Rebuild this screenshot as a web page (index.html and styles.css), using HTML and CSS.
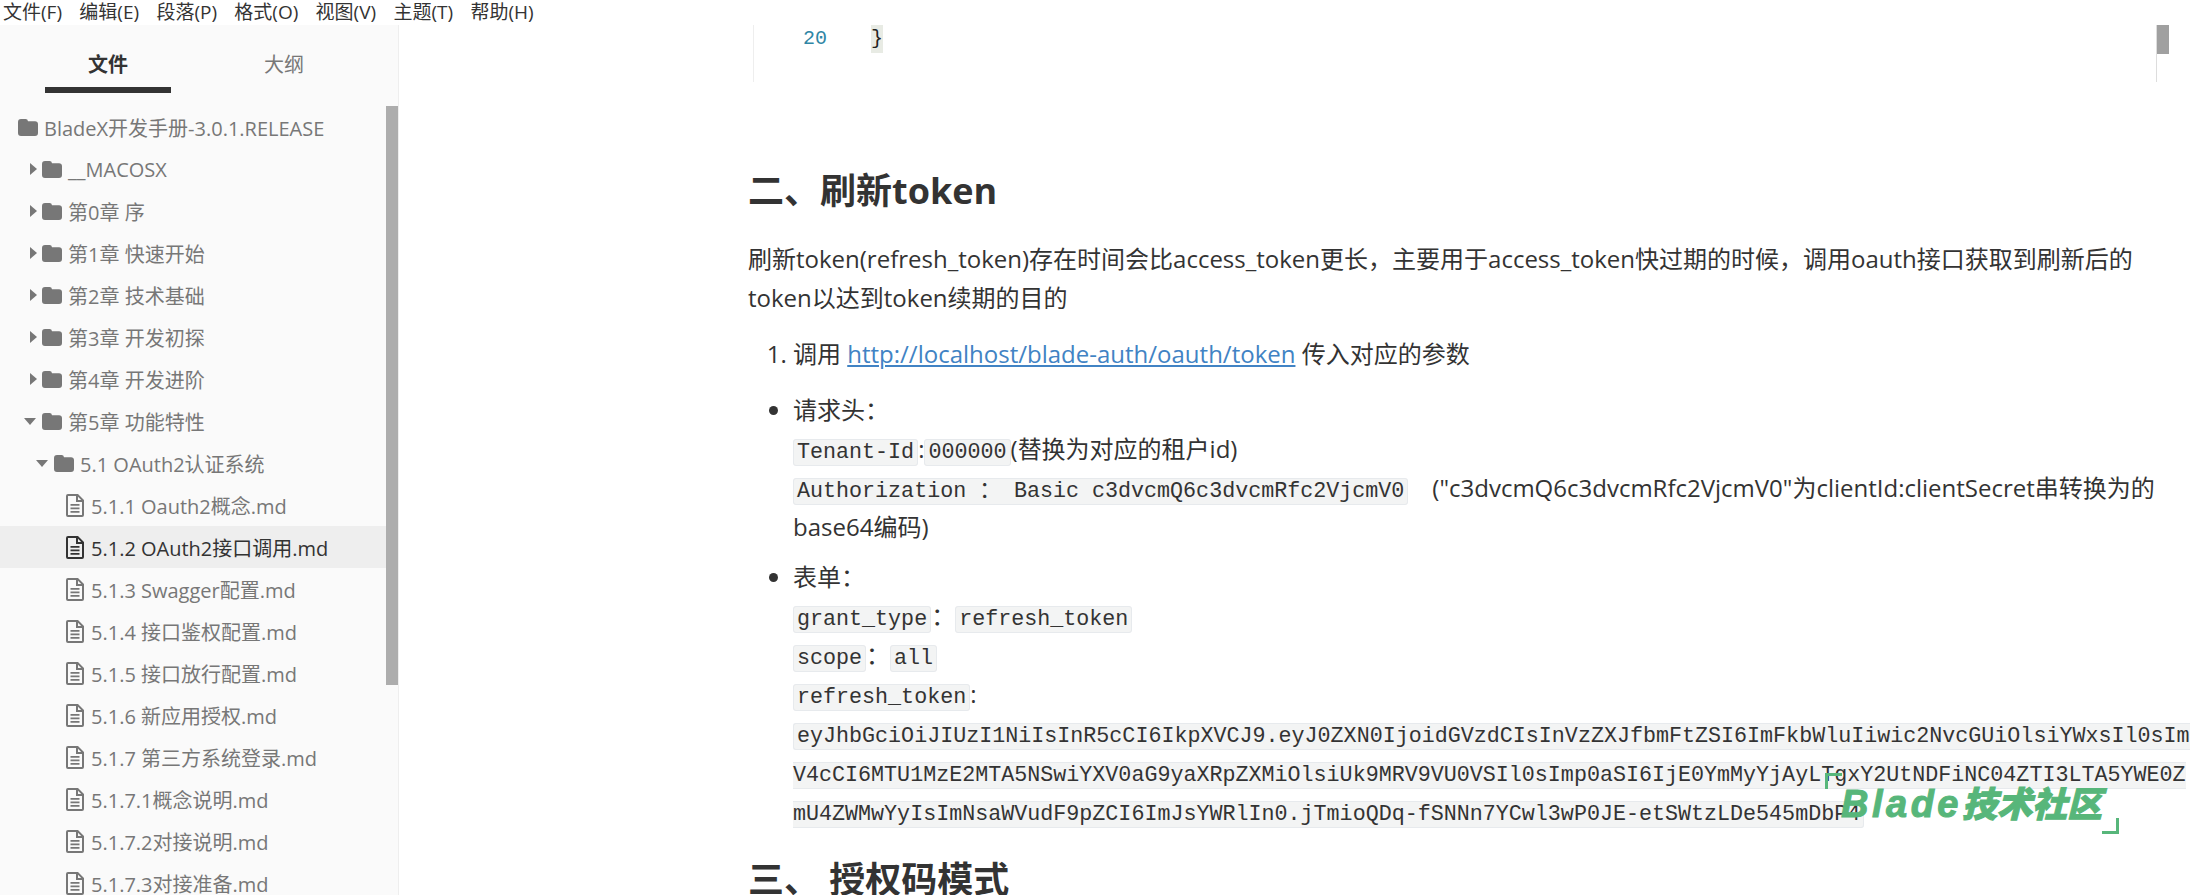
FILE: index.html
```html
<!DOCTYPE html>
<html lang="zh-CN">
<head>
    <meta charset="UTF-8">
    <meta name="viewport" content="width=device-width, initial-scale=1.0">
    <title>OAuth2接口调用</title>
    <link rel="stylesheet" href="styles.css">
</head>
<body>
    <svg class="icon-defs" aria-hidden="true">
        <symbol id="i-folder" viewBox="0 0 20 17">
            <path d="M3 0h4.500a2.500 2.500 0 0 1 2.500 2.200h7a3 3 0 0 1 3 2.800v9a3 3 0 0 1-3 3H3a3 3 0 0 1-3-3V3a3 3 0 0 1 3-3z"/>
        </symbol>
        <symbol id="i-file" viewBox="0 0 18 23">
            <path fill-rule="evenodd" d="M2 0h10l6 6v15a2 2 0 0 1-2 2H2a2 2 0 0 1-2-2V2a2 2 0 0 1 2-2zm0 2v19h14V8h-6V2zm10 .8V6h3.200zM4.500 10h9v1.800h-9zm0 3.500h9v1.800h-9zm0 3.500h9v1.800h-9z"/>
        </symbol>
        <symbol id="i-right" viewBox="0 0 7 12"><path d="M0 0l7 6-7 6z"/></symbol>
        <symbol id="i-down" viewBox="0 0 12 7"><path d="M0 0h12L6 7z"/></symbol>
    </svg>

    <div class="app">
        <nav class="menubar">
            <span>文件(F)</span>
            <span>编辑(E)</span>
            <span>段落(P)</span>
            <span>格式(O)</span>
            <span>视图(V)</span>
            <span>主题(T)</span>
            <span>帮助(H)</span>
        </nav>

        <div class="workspace">
            <aside class="sidebar">
                <div class="sidebar-panel">
                    <div class="tabs">
                        <div class="tab active">文件</div>
                        <div class="tab">大纲</div>
                    </div>
                    <ul class="tree">
                        <li class="row lv0"><svg class="ic-folder"><use href="#i-folder"/></svg>BladeX开发手册-3.0.1.RELEASE</li>
                        <li class="row lv1"><svg class="ic-right"><use href="#i-right"/></svg><svg class="ic-folder"><use href="#i-folder"/></svg>__MACOSX</li>
                        <li class="row lv1"><svg class="ic-right"><use href="#i-right"/></svg><svg class="ic-folder"><use href="#i-folder"/></svg>第0章 序</li>
                        <li class="row lv1"><svg class="ic-right"><use href="#i-right"/></svg><svg class="ic-folder"><use href="#i-folder"/></svg>第1章 快速开始</li>
                        <li class="row lv1"><svg class="ic-right"><use href="#i-right"/></svg><svg class="ic-folder"><use href="#i-folder"/></svg>第2章 技术基础</li>
                        <li class="row lv1"><svg class="ic-right"><use href="#i-right"/></svg><svg class="ic-folder"><use href="#i-folder"/></svg>第3章 开发初探</li>
                        <li class="row lv1"><svg class="ic-right"><use href="#i-right"/></svg><svg class="ic-folder"><use href="#i-folder"/></svg>第4章 开发进阶</li>
                        <li class="row lv1"><svg class="ic-down"><use href="#i-down"/></svg><svg class="ic-folder"><use href="#i-folder"/></svg>第5章 功能特性</li>
                        <li class="row lv2"><svg class="ic-down"><use href="#i-down"/></svg><svg class="ic-folder"><use href="#i-folder"/></svg>5.1 OAuth2认证系统</li>
                        <li class="row file"><svg class="ic-file"><use href="#i-file"/></svg>5.1.1 Oauth2概念.md</li>
                        <li class="row file selected"><svg class="ic-file"><use href="#i-file"/></svg>5.1.2 OAuth2接口调用.md</li>
                        <li class="row file"><svg class="ic-file"><use href="#i-file"/></svg>5.1.3 Swagger配置.md</li>
                        <li class="row file"><svg class="ic-file"><use href="#i-file"/></svg>5.1.4 接口鉴权配置.md</li>
                        <li class="row file"><svg class="ic-file"><use href="#i-file"/></svg>5.1.5 接口放行配置.md</li>
                        <li class="row file"><svg class="ic-file"><use href="#i-file"/></svg>5.1.6 新应用授权.md</li>
                        <li class="row file"><svg class="ic-file"><use href="#i-file"/></svg>5.1.7 第三方系统登录.md</li>
                        <li class="row file"><svg class="ic-file"><use href="#i-file"/></svg>5.1.7.1概念说明.md</li>
                        <li class="row file"><svg class="ic-file"><use href="#i-file"/></svg>5.1.7.2对接说明.md</li>
                        <li class="row file"><svg class="ic-file"><use href="#i-file"/></svg>5.1.7.3对接准备.md</li>
                    </ul>
                </div>
                <div class="sidebar-scroll"><div class="sidebar-thumb"></div></div>
            </aside>

            <main class="content">
                <div class="code-block">
                    <span class="line-no">20</span>
                    <span class="code-line"><span class="bracket">}</span></span>
                    <div class="code-scroll"><div class="code-thumb"></div></div>
                </div>

                <h2>二、刷新token</h2>
                <p>刷新token(refresh_token)存在时间会比access_token更长，主要用于access_token快过期的时候，调用oauth接口获取到刷新后的token以达到token续期的目的</p>

                <ol>
                    <li>调用 <a href="#">http://localhost/blade-auth/oauth/token</a> 传入对应的参数</li>
                </ol>

                <ul class="doc-list">
                    <li>
                        请求头：<br>
                        <code>Tenant-Id</code>:<code>000000</code>(替换为对应的租户id)<br>
                        <code>Authorization ： Basic c3dvcmQ6c3dvcmRfc2VjcmV0</code>　("c3dvcmQ6c3dvcmRfc2VjcmV0"为clientId:clientSecret串转换为的base64编码)
                    </li>
                    <li>
                        表单：<br>
                        <code>grant_type</code>：<code>refresh_token</code><br>
                        <code>scope</code>：<code>all</code><br>
                        <code>refresh_token</code>:<br>
                        <code class="token">eyJhbGciOiJIUzI1NiIsInR5cCI6IkpXVCJ9.eyJ0ZXN0IjoidGVzdCIsInVzZXJfbmFtZSI6ImFkbWluIiwic2NvcGUiOlsiYWxsIl0sImV4cCI6MTU1MzE2MTA5NSwiYXV0aG9yaXRpZXMiOlsiUk9MRV9VU0VSIl0sImp0aSI6IjE0YmMyYjAyLTgxY2UtNDFiNC04ZTI3LTA5YWE0ZmU4ZWMwYyIsImNsaWVudF9pZCI6ImJsYWRlIn0.jTmioQDq-fSNNn7YCwl3wP0JE-etSWtzLDe545mDbP4</code>
                    </li>
                </ul>

                <h2>三、 授权码模式</h2>
            </main>
        </div>

        <div class="watermark">
            <span class="wm-corner wm-tl"></span>
            <span class="wm-latin">Blade</span>技术社区
            <span class="wm-corner wm-br"></span>
        </div>
    </div>
</body>
</html>
```

FILE: styles.css
```css
html, body {
    margin: 0;
    height: 100%;
    overflow: hidden;
}
body {
    font-family: "Open Sans", "Noto Sans CJK SC", sans-serif;
    color: #333;
    background: #fff;
}
.icon-defs {
    display: none;
}
.app {
    height: 100vh;
    display: flex;
    flex-direction: column;
    overflow: hidden;
    position: relative;
}

/* menu */
.menubar {
    height: 25px;
    flex: none;
    display: flex;
    gap: 17.3px;
    padding-left: 3px;
    font-size: 19px;
    line-height: 25px;
}
.workspace {
    flex: 1;
    display: flex;
    min-height: 0;
}

/* sidebar */
.sidebar {
    width: 398px;
    flex: none;
    display: flex;
    background: #fafafa;
    border-right: 1px solid #eee;
    overflow: hidden;
}
.sidebar-panel {
    flex: 1;
    min-width: 0;
}
.sidebar-scroll {
    width: 12px;
    flex: none;
}
.sidebar-thumb {
    margin-top: 81px;
    height: 579px;
    background: #adadad;
}
.tabs {
    display: flex;
    gap: 50px;
    padding: 25px 0 0 45px;
    margin-bottom: 13px;
}
.tab {
    width: 126px;
    height: 37px;
    border-bottom: 6px solid transparent;
    text-align: center;
    font-size: 20px;
    line-height: 30px;
    color: #777;
}
.tab.active {
    font-weight: bold;
    color: #333;
    border-bottom-color: #333;
}
.tree {
    list-style: none;
    margin: 0;
    padding: 0;
}
.row {
    height: 42px;
    display: flex;
    align-items: center;
    font-size: 20px;
    color: #777;
    white-space: nowrap;
}
.row svg {
    flex: none;
    fill: currentColor;
}
.lv0 { padding-left: 18px; }
.lv1 { padding-left: 24px; }
.lv2 { padding-left: 36px; }
.file { padding-left: 66px; }
.selected {
    background: #eee;
    color: #333;
}
.ic-folder {
    width: 20px;
    height: 17px;
    margin-right: 6px;
}
.ic-file {
    width: 18px;
    height: 23px;
    margin-right: 7px;
}
.ic-right {
    width: 7px;
    height: 12px;
    margin: 0 5px 0 6px;
}
.ic-down {
    width: 12px;
    height: 7px;
    margin-right: 6px;
}

/* document */
.content {
    flex: 1;
    min-width: 0;
    padding: 0 15px 0 349px;
    overflow: hidden;
    font-size: 24px;
    line-height: 39px;
}
.code-block {
    display: flex;
    height: 57px;
    margin: 0 23px 0 5px;
    border-left: 1px solid #eee;
    font-family: "Liberation Mono", monospace;
    font-size: 20px;
    line-height: 28px;
}
.line-no {
    width: 68px;
    flex: none;
    padding-left: 49px;
    box-sizing: border-box;
    color: #2f86a5;
}
.code-line {
    flex: 1;
    padding-left: 49px;
}
.bracket {
    display: inline-block;
    height: 28px;
    background: #e8ebe4;
    color: #222;
}
.code-scroll {
    width: 12px;
    flex: none;
    border-left: 1px solid #ddd;
}
.code-thumb {
    height: 29px;
    background: #a0a0a0;
}
h2 {
    margin: 84px 0 24px;
    font-size: 36px;
    line-height: 50px;
    font-weight: bold;
}
ul + h2 {
    margin-top: 25px;
}
p {
    margin: 0;
    line-height: 38.5px;
}
ol {
    margin: 17px 0 0;
    padding-left: 45px;
}
.doc-list {
    margin: 17px 0 0;
    padding-left: 45px;
}
.doc-list li + li {
    margin-top: 11px;
}
a {
    color: #4183c4;
}
code {
    font-family: "Liberation Mono", "Noto Sans CJK SC", monospace;
    font-size: 21.7px;
    line-height: 1;
    padding: 0 3px;
    background: #f3f4f4;
    border: 1px solid #e7eaed;
    border-radius: 3px;
    white-space: pre-wrap;
}
.token {
    word-break: break-all;
}

/* watermark over the page */
.watermark {
    position: absolute;
    left: 1841px;
    top: 782px;
    font-family: "Liberation Sans", "Noto Sans CJK SC", sans-serif;
    font-size: 35px;
    line-height: 44px;
    font-weight: 900;
    font-style: italic;
    color: #57b67a;
    white-space: nowrap;
    -webkit-text-stroke: 1px #57b67a;
}
.wm-latin {
    font-size: 38px;
    letter-spacing: 3.5px;
}
.wm-corner {
    position: absolute;
    width: 14px;
    height: 13px;
    border: 0 solid #57b67a;
}
.wm-tl {
    left: -16px;
    top: -9px;
    border-width: 3px 0 0 3px;
}
.wm-br {
    right: -17px;
    bottom: -7px;
    border-width: 0 3px 3px 0;
}
```
